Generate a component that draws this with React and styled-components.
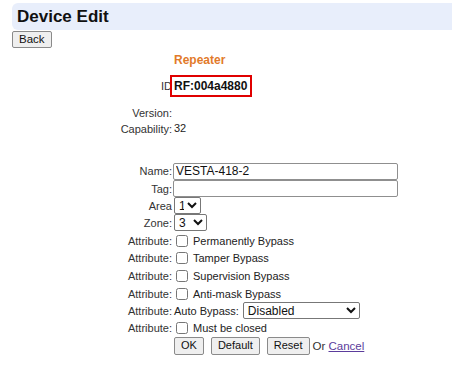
import React from "react";
import styled, { createGlobalStyle } from "styled-components";

const GlobalStyle = createGlobalStyle`
    body {
        margin: 0;
        background: #fff;
        font-family: "Liberation Sans", Arial, sans-serif;
        font-size: 11px;
        color: #222;
    }
`;

const Page = styled.div`
    padding: 3px 0 0 12px;
`;

const Header = styled.div`
    background: #e8eefb;
    border-radius: 6px 0 0 6px;
    height: 27px;
    display: flex;
    align-items: center;
    padding-left: 5px;
    font-size: 17px;
    font-weight: bold;
    color: #111;
`;

const BackButton = styled.button`
    font-family: inherit;
    font-size: 11.5px;
    height: 17px;
    padding: 0 6px;
    margin-top: 1px;
    background: #efefef;
    border: 1px solid #8a8a8a;
    border-radius: 2px;
    color: #111;
    line-height: 1;
`;

const Form = styled.div`
    display: flex;
    flex-direction: column;
    margin-left: 88px;
`;

const Row = styled.div`
    display: flex;
    align-items: center;
    height: ${(p) => p.$h}px;
    margin-top: ${(p) => p.$mt || 0}px;
`;

const Label = styled.div`
    width: 72px;
    text-align: right;
    color: #333;
    flex: none;
`;

const Value = styled.div`
    display: flex;
    align-items: center;
    gap: ${(p) => p.$gap || 0}px;
    padding-left: ${(p) => p.$pl ?? 2}px;
    color: #222;
`;

const Title = styled.span`
    font-size: 12px;
    font-weight: bold;
    color: #e27a2a;
`;

const IdBox = styled.span`
    margin-left: -2px;
    border: 2px solid #e00000;
    padding: 2px 3px 2px 2px;
    font-size: 12px;
    font-weight: bold;
    color: #111;
`;

const Raised = styled.span`
    margin-top: -3px;
`;

const TextInput = styled.input`
    width: 225px;
    height: 17px;
    box-sizing: border-box;
    border: 1px solid #8f8f8f;
    border-radius: 2px;
    font-family: inherit;
    font-size: 12px;
    padding: 0 2px;
    color: #111;
`;

const Select = styled.select`
    height: 17px;
    width: ${(p) => p.$w}px;
    box-sizing: border-box;
    border: 1px solid #777;
    border-radius: 2px;
    font-family: inherit;
    font-size: 12px;
    padding: 0;
    color: #111;
    background: #fff;
`;

const Check = styled.input`
    width: 12px;
    height: 12px;
    margin: 0 5px 0 4px;
`;

const Button = styled.button`
    font-family: inherit;
    font-size: 11px;
    height: 18px;
    padding: 0 6px;
    background: #efefef;
    border: 1px solid #8a8a8a;
    border-radius: 2px;
    color: #111;
    line-height: 1;
`;

const Trailer = styled.span`
    margin-left: -4px;
    font-size: 11.5px;
    color: #333;
`;

const CancelLink = styled.a`
    color: #5b3c9c;
    text-decoration: underline;
`;

const attributes = [
    "Permanently Bypass",
    "Tamper Bypass",
    "Supervision Bypass",
    "Anti-mask Bypass",
];

export default function App() {
    return (
        <>
            <GlobalStyle />
            <Page>
                <Header>Device Edit</Header>
                <BackButton>Back</BackButton>
                <Form>
                    <Row $h={19} $mt={2}>
                        <Label />
                        <Value>
                            <Title>Repeater</Title>
                        </Value>
                    </Row>
                    <Row $h={24} $mt={5}>
                        <Label>ID</Label>
                        <Value $pl={0}>
                            <IdBox>RF:004a4880</IdBox>
                        </Value>
                    </Row>
                    <Row $h={16} $mt={7}>
                        <Label>Version:</Label>
                        <Value />
                    </Row>
                    <Row $h={16}>
                        <Label>Capability:</Label>
                        <Value>
                            <Raised>32</Raised>
                        </Value>
                    </Row>
                    <Row $h={18} $mt={25}>
                        <Label>Name:</Label>
                        <Value $pl={1}>
                            <TextInput defaultValue="VESTA-418-2" />
                        </Value>
                    </Row>
                    <Row $h={17}>
                        <Label>Tag:</Label>
                        <Value $pl={1}>
                            <TextInput defaultValue="" />
                        </Value>
                    </Row>
                    <Row $h={17}>
                        <Label>Area</Label>
                        <Value>
                            <Select $w={27} defaultValue="1">
                                <option>1</option>
                            </Select>
                        </Value>
                    </Row>
                    <Row $h={17}>
                        <Label>Zone:</Label>
                        <Value>
                            <Select $w={33} defaultValue="3">
                                <option>3</option>
                            </Select>
                        </Value>
                    </Row>
                    {attributes.map((a, i) => (
                        <Row key={a} $h={17.6} $mt={i === 0 ? 1 : 0}>
                            <Label>Attribute:</Label>
                            <Value $pl={0}>
                                <Check type="checkbox" />
                                {a}
                            </Value>
                        </Row>
                    ))}
                    <Row $h={16.5}>
                        <Label>Attribute:</Label>
                        <Value $gap={4}>
                            Auto Bypass:
                            <Select $w={117} defaultValue="Disabled">
                                <option>Disabled</option>
                            </Select>
                        </Value>
                    </Row>
                    <Row $h={18}>
                        <Label>Attribute:</Label>
                        <Value $pl={0}>
                            <Check type="checkbox" />
                            Must be closed
                        </Value>
                    </Row>
                    <Row $h={18}>
                        <Label />
                        <Value $gap={7}>
                            <Button>OK</Button>
                            <Button>Default</Button>
                            <Button>Reset</Button>
                            <Trailer>
                                Or <CancelLink href="#">Cancel</CancelLink>
                            </Trailer>
                        </Value>
                    </Row>
                </Form>
            </Page>
        </>
    );
}
